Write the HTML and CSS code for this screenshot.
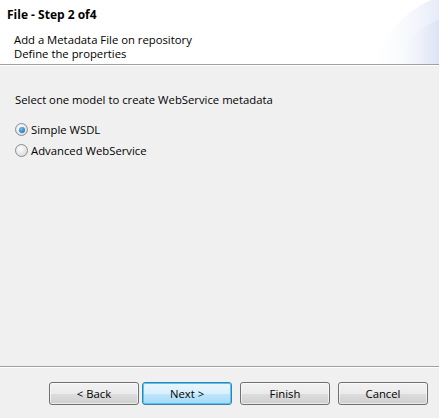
FILE: index.html
```html
<!DOCTYPE html>
<html>
<head>
<meta charset="utf-8">
<link rel="stylesheet" href="styles.css">
</head>
<body>
<div class="dialog">
  <header class="header">
    <div class="title">File - Step 2 of4</div>
    <div class="desc">Add a Metadata File on repository</div>
    <div class="desc">Define the properties</div>
    <svg class="swoosh" width="120" height="64" viewBox="0 0 120 64">
      <defs>
        <linearGradient id="g1" x1="0" y1="0" x2="1" y2="0">
          <stop offset="0" stop-color="#ffffff" stop-opacity="0"/>
          <stop offset="1" stop-color="#e6ebf8"/>
        </linearGradient>
        <linearGradient id="g2" x1="0" y1="0" x2="1" y2="0">
          <stop offset="0" stop-color="#ffffff" stop-opacity="0"/>
          <stop offset="1" stop-color="#dce3f5"/>
        </linearGradient>
      </defs>
      <path d="M48 64 C66 34 88 10 112 0 L120 0 L120 64 Z" fill="url(#g1)"/>
      <path d="M73 64 C86 44 100 26 120 20 L120 64 Z" fill="url(#g2)"/>
    </svg>
  </header>
  <main class="body">
    <p class="prompt">Select one model to create WebService metadata</p>
    <label class="radio"><span class="dot checked"></span>Simple WSDL</label>
    <label class="radio"><span class="dot"></span>Advanced WebService</label>
  </main>
  <footer class="footer">
    <button class="btn back">&lt; Back</button>
    <button class="btn default">Next &gt;</button>
    <button class="btn">Finish</button>
    <button class="btn">Cancel</button>
  </footer>
</div>
</body>
</html>
```
FILE: styles.css
```css
html, body {
  margin: 0;
  padding: 0;
}
body {
  width: 439px;
  height: 418px;
  background: #f0f0f0;
  font-family: "Open Sans", "Noto Sans", sans-serif;
  font-size: 11.3px;
  color: #000;
  overflow: hidden;
}
.dialog {
  display: flex;
  flex-direction: column;
  height: 418px;
}
.header {
  position: relative;
  height: 65px;
  background: #fff;
  border-bottom: 1px solid #a0a0a0;
  box-sizing: border-box;
  padding: 6px 0 0 7px;
  overflow: hidden;
}
.title {
  font-weight: bold;
  font-size: 12px;
  line-height: 18px;
  margin-bottom: 9px;
}
.desc {
  padding-left: 7px;
  line-height: 14px;
}
.swoosh {
  position: absolute;
  right: 0;
  top: 0;
}
.body {
  flex: 1;
  padding: 26px 15px 0;
  border-top: 1px solid #fff;
}
.prompt {
  margin: 0 0 14px;
  line-height: 15px;
}
.radio {
  display: flex;
  align-items: center;
  gap: 3px;
  height: 17px;
  margin-bottom: 4px;
}
.dot {
  width: 13px;
  height: 13px;
  border-radius: 50%;
  border: 1px solid #8c8c8c;
  background: radial-gradient(circle at 40% 35%, #fdfdfd, #d2d2d2);
  box-sizing: border-box;
  position: relative;
}
.dot.checked::after {
  content: "";
  position: absolute;
  left: 2.5px;
  top: 2.5px;
  width: 6px;
  height: 6px;
  border-radius: 50%;
  background: radial-gradient(circle at 40% 35%, #6cc2f2, #0f5aa5);
}
.footer {
  height: 52px;
  border-top: 1px solid #a0a0a0;
  box-shadow: inset 0 1px 0 #fff;
  display: flex;
  justify-content: flex-end;
  align-items: flex-start;
  padding: 15px 11px 0 0;
  box-sizing: border-box;
  gap: 8px;
}
.btn {
  width: 90px;
  height: 23px;
  font: inherit;
  border: 1px solid #707070;
  border-radius: 3px;
  background: linear-gradient(#f2f2f2 0%, #ebebeb 50%, #dddddd 51%, #cfcfcf 100%);
  color: #000;
  padding: 0;
  box-shadow: inset 0 0 0 1px rgba(255,255,255,0.6);
}
.btn.back {
  margin-right: -5px;
}
.btn.default {
  border-color: #3c7fb1;
  background: linear-gradient(#eaf6fd 0%, #d9f0fc 50%, #bee6fd 51%, #a7d9f5 100%);
  box-shadow: inset 0 0 0 1px #4fc7f4;
}
```
